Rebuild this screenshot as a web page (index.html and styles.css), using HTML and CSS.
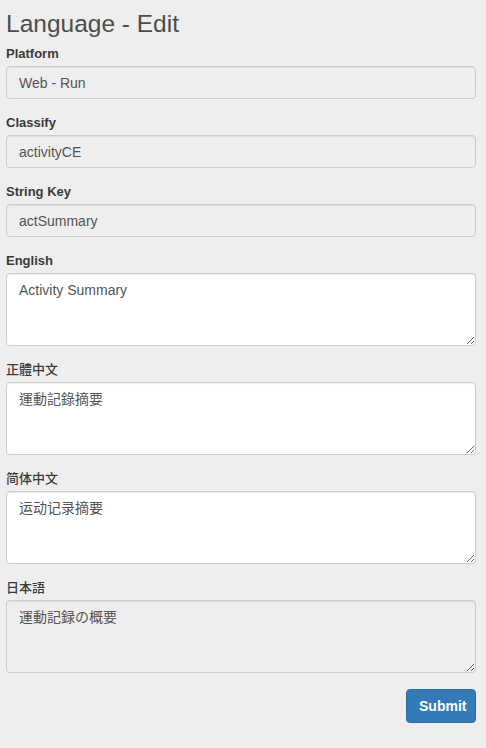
FILE: index.html
```html
<!DOCTYPE html>
<html lang="en">
<head>
<meta charset="utf-8">
<title>Language - Edit</title>
<link rel="stylesheet" href="styles.css">
</head>
<body>
<main class="page">
  <h1 class="title">Language - Edit</h1>
  <form class="form">
    <div class="group">
      <label class="label">Platform</label>
      <input class="control" type="text" value="Web - Run" disabled>
    </div>
    <div class="group">
      <label class="label">Classify</label>
      <input class="control" type="text" value="activityCE" disabled>
    </div>
    <div class="group">
      <label class="label">String Key</label>
      <input class="control" type="text" value="actSummary" disabled>
    </div>
    <div class="group">
      <label class="label">English</label>
      <textarea class="control area">Activity Summary</textarea>
    </div>
    <div class="group">
      <label class="label cjk" lang="zh-Hant">正體中文</label>
      <textarea class="control area" lang="zh-Hant">運動記錄摘要</textarea>
    </div>
    <div class="group">
      <label class="label cjk" lang="zh-Hans">简体中文</label>
      <textarea class="control area" lang="zh-Hans">运动记录摘要</textarea>
    </div>
    <div class="group">
      <label class="label cjk" lang="ja">日本語</label>
      <textarea class="control area" lang="ja" disabled>運動記録の概要</textarea>
    </div>
    <div class="actions">
      <button class="btn" type="button">Submit</button>
    </div>
  </form>
</main>
</body>
</html>
```
FILE: styles.css
```css
html, body {
  margin: 0;
  padding: 0;
  background: #eeeeee;
}
body {
  font-family: "Liberation Sans", Arial, "Noto Sans CJK TC", sans-serif;
  color: #333333;
  font-size: 14px;
}
.page {
  padding: 9px 10px 0 6px;
}
.title {
  margin: 0 0 6px;
  font-size: 24.5px;
  line-height: 29px;
  font-weight: normal;
  color: #4d4d4d;
}
.form {
  display: flex;
  flex-direction: column;
}
.group {
  display: flex;
  flex-direction: column;
  margin-bottom: 14px;
}
.label {
  display: block;
  font-size: 13px;
  line-height: 19px;
  font-weight: bold;
  margin-bottom: 3px;
  color: #3a3a3a;
}
.label.cjk {
  font-family: "Noto Sans CJK TC", "Noto Sans CJK SC", "Noto Sans CJK JP", sans-serif;
  font-weight: 500;
  line-height: 17px;
  margin-bottom: 5px;
  color: #3a3a3a;
}
.label.cjk:lang(zh-Hans) { font-family: "Noto Sans CJK SC", sans-serif; }
.label.cjk:lang(ja) { font-family: "Noto Sans CJK JP", sans-serif; }
.control {
  box-sizing: border-box;
  width: 100%;
  height: 33px;
  margin: 0;
  padding: 6px 12px;
  font-family: "Liberation Sans", Arial, "Noto Sans CJK TC", sans-serif;
  font-size: 14px;
  line-height: 20px;
  color: #555555;
  background: #ffffff;
  border: 1px solid #cccccc;
  border-radius: 4px;
  box-shadow: inset 0 1px 1px rgba(0, 0, 0, 0.075);
}
.control:disabled {
  background: #eeeeee;
  color: #555555;
  opacity: 1;
  -webkit-text-fill-color: #555555;
}
.area {
  height: 73px;
  resize: vertical;
}
textarea:lang(zh-Hans) { font-family: "Liberation Sans", "Noto Sans CJK SC", sans-serif; }
textarea:lang(ja) { font-family: "Liberation Sans", "Noto Sans CJK JP", sans-serif; }
.actions {
  display: flex;
  justify-content: flex-end;
  margin-top: 2px;
}
.btn {
  box-sizing: border-box;
  width: 70px;
  height: 34px;
  padding: 6px 12px;
  font-family: "Liberation Sans", Arial, sans-serif;
  font-size: 14px;
  font-weight: bold;
  color: #ffffff;
  background: #337ab7;
  border: 1px solid #2e6da4;
  border-radius: 4px;
}
```
